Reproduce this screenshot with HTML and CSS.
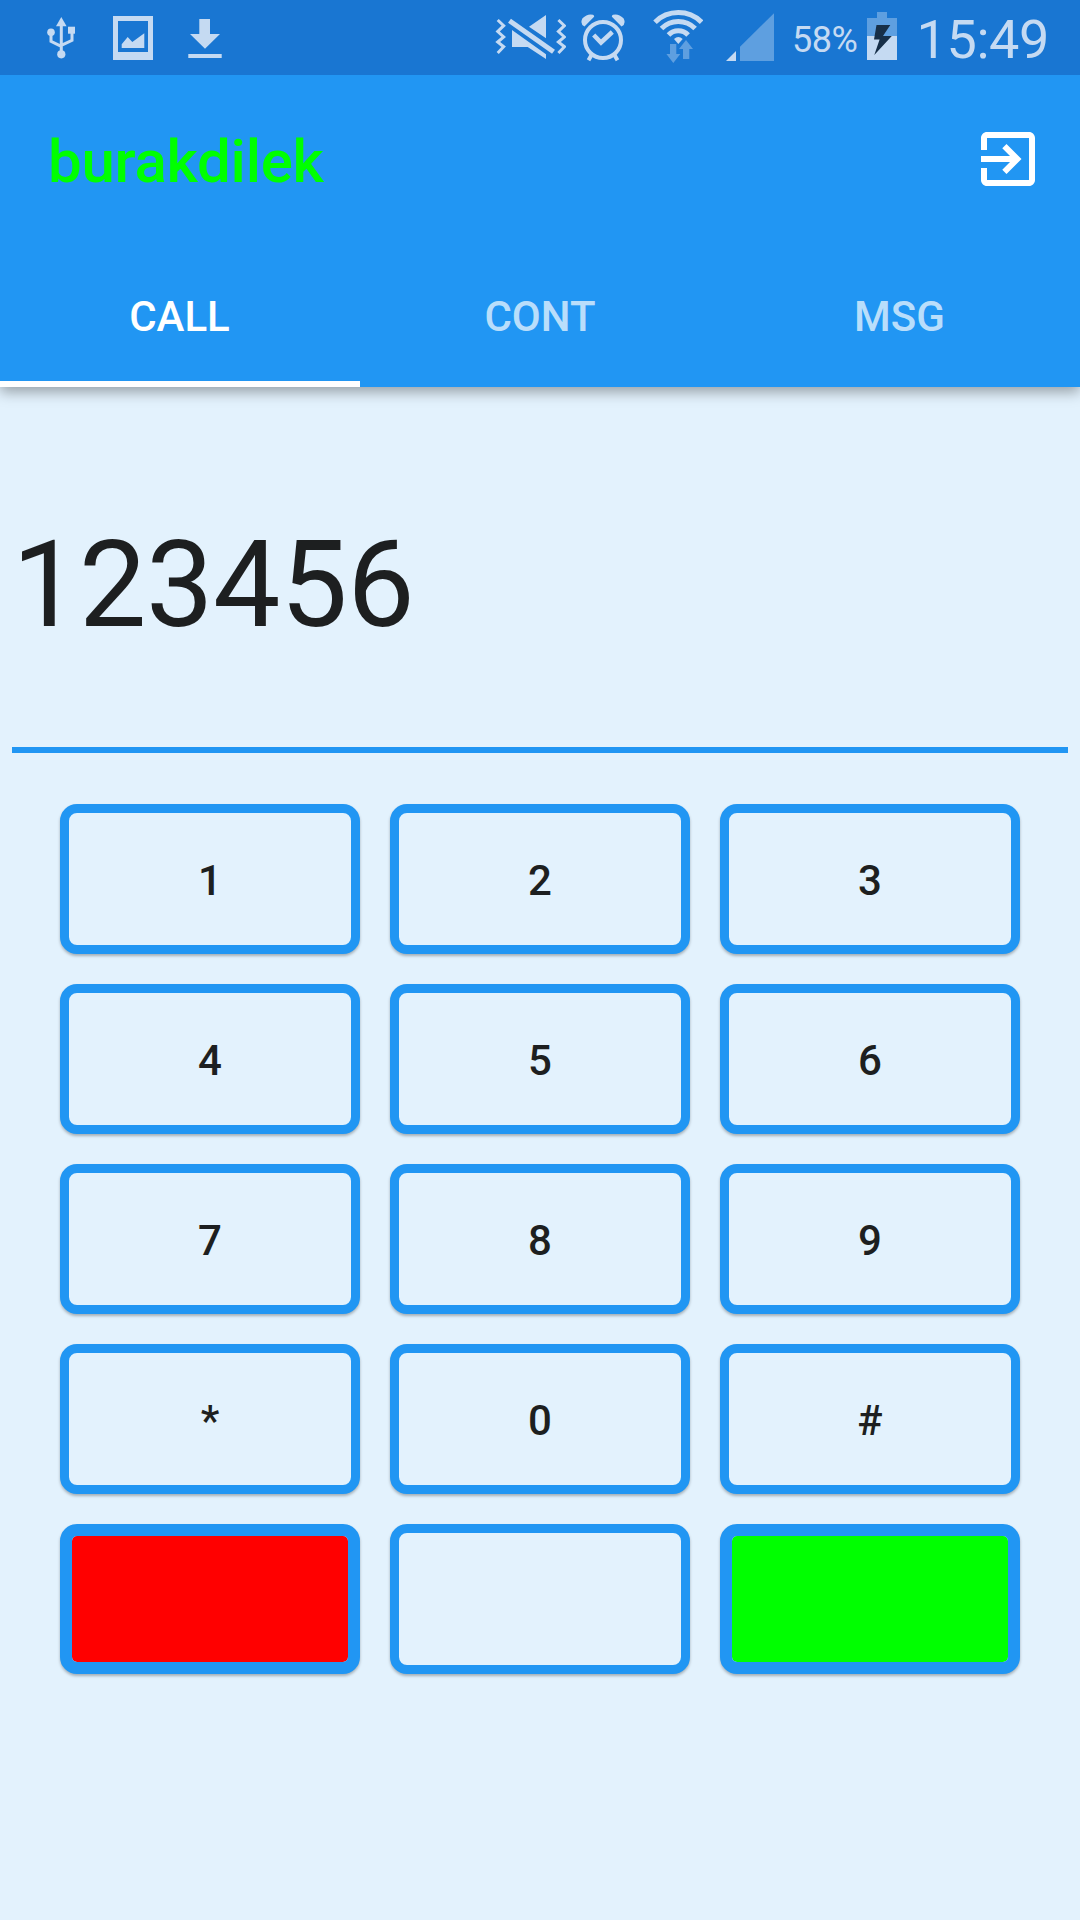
FILE: index.html
```html
<!DOCTYPE html>
<html lang="en">
<head>
<meta charset="utf-8">
<title>Dialer</title>
<link rel="stylesheet" href="styles.css">
</head>
<body>
<div class="screen">
  <div class="status">
    <div class="status-left">
      <svg width="30" height="75" viewBox="46 0 30 75">
        <g class="line" stroke-width="3"><path d="M61.3 24V54M51 34v7.3l10.3 5M72 33v7.3l-10.7 5"/></g>
        <g class="solid"><path d="M61.3 17l5.3 9.2H56z"/><circle cx="61.3" cy="54.3" r="4.1"/><circle cx="51" cy="32.3" r="3.8"/><path d="M68 26.7h7v7h-7z"/></g>
      </svg>
      <svg width="40" height="75" viewBox="113 0 40 75">
        <path class="solid" fill-rule="evenodd" d="M113 16h40v44h-40zM118 21v31h30V21z"/>
        <path class="solid" d="M121.7 44.3l6-7.3 4.6 5 12-8.7V48h-22.6z"/>
      </svg>
      <svg width="34" height="75" viewBox="188 0 34 75">
        <path class="solid" d="M199.3 19H210v15h10l-15 14.7L190 34h9.3zM188.3 54h33.4v4h-33.4z"/>
      </svg>
    </div>
    <div class="status-right">
      <svg width="71" height="75" viewBox="495 0 71 75">
        <g class="line" stroke-width="3"><path d="M497.7 20l6 5.7-6 5.8 6 5.5-6 5 6 4.7-6 6.3M558.4 20l6 5.7-6 5.8 6 5.5-6 5 6 4.7-6 6.3"/></g>
        <path class="line" stroke-width="5" d="M509.5 20.7l44 31"/>
        <path class="solid" d="M529 26.7L546 15v23.3zM512 30l34 24.3V59l-18.3-12H512z"/>
      </svg>
      <svg width="44" height="75" viewBox="581 0 44 75">
        <g class="line" stroke-width="4"><circle cx="603" cy="40" r="18"/><path d="M593.7 35l7.3 7.5 11.3-10.5" stroke-width="4.5"/><path d="M591.5 55l-3 5.3M614.5 55l3 5.3"/></g>
        <path class="solid" d="M584.5 26.5q-5-3-2-8.200q5-5 10.500-3.500q2 1 .6 2.500zM621.500 26.500q5-3 2-8.200q-5-5-10.500-3.500q-2 1-.6 2.500z"/>
      </svg>
      <svg width="50" height="75" viewBox="653 0 50 75">
        <g class="line" stroke-width="5"><path d="M655 22.200A33.100 33.100 0 0 1 701.600 22.200M661.500 28.500A23.400 23.400 0 0 1 695.100 28.500M668.500 35A13.500 13.500 0 0 1 688.100 35"/></g>
        <path class="solid" d="M674 39q4.300-4 8.700 0l-4.400 5z"/>
        <path class="dim" d="M670 44h6.300v10h4l-7 9-6.900-9h3.600zM683 59V49h-4l7-9 7 9h-3.700v10z"/>
      </svg>
      <svg width="48" height="75" viewBox="726 0 48 75">
        <path class="solid" d="M726 61l10-10v10z"/><path class="dim" d="M740 61V46.700L774 13.300V61z"/>
      </svg>
      <span class="percent">58%</span>
      <svg width="30" height="75" viewBox="867 0 30 75">
        <path class="dim" d="M877 12h10v6h10v18h-30V18h10z"/><path class="solid" d="M867 36h30v24h-30z"/>
        <path class="bolt" d="M876.500 25h13.800L883 36h8.800L874.300 55l5.300-15.500H874z"/>
      </svg>
      <span class="clock">15:49</span>
    </div>
  </div>
  <header class="appbar">
    <div class="toolbar">
      <h1 class="title">burakdilek</h1>
      <svg class="exit" width="72" height="72" viewBox="0 0 24 24"><path d="M10.090 15.590L11.500 17l5-5-5-5-1.410 1.410L12.670 11H3v2h9.670l-2.580 2.590zM19 3H5c-1.110 0-2 .9-2 2v4h2V5h14v14H5v-4H3v4c0 1.100.89 2 2 2h14c1.100 0 2-.9 2-2V5c0-1.100-.9-2-2-2z"/></svg>
    </div>
    <nav class="tabs">
      <div class="tab active">CALL</div>
      <div class="tab">CONT</div>
      <div class="tab">MSG</div>
    </nav>
  </header>
  <main class="content">
    <div class="number">123456</div>
    <div class="keypad">
      <button class="key">1</button><button class="key">2</button><button class="key">3</button>
      <button class="key">4</button><button class="key">5</button><button class="key">6</button>
      <button class="key">7</button><button class="key">8</button><button class="key">9</button>
      <button class="key">*</button><button class="key">0</button><button class="key">#</button>
      <button class="key hangup"></button><button class="key"></button><button class="key dial"></button>
    </div>
  </main>
</div>
</body>
</html>
```
FILE: styles.css
```css
* { box-sizing: border-box; }
body { margin: 0; font-family: Roboto, "Liberation Sans", sans-serif; color: #1d1f20; background: #e3f2fd; }
svg { display: block; flex: none; }
.screen { width: 1080px; height: 1920px; overflow: hidden; background: #e3f2fd; }

.status { position: relative; z-index: 1; display: flex; justify-content: space-between; height: 75px; padding: 0 33px 0 46px; background: #1976d2; color: #c5daf2; }
.status-left { display: flex; gap: 35px; }
.status-left svg:first-child { margin-right: 2px; }
.status-right { display: flex; }
.status-right svg + svg { margin-left: 15px; }
.status-right svg:nth-of-type(3) { margin-left: 28px; }
.status-right svg:nth-of-type(4) { margin-left: 23px; }
.solid { fill: #c5daf2; }
.line { fill: none; stroke: #c5daf2; }
.dim { fill: #5e9fe0; }
.bolt { fill: #172f48; }
.percent { width: 75px; margin-left: 18px; font-size: 36px; line-height: 80px; letter-spacing: -.5px; }
.clock { width: 134px; margin: 0 -2px 0 18px; font-size: 54px; line-height: 80px; text-align: right; letter-spacing: -.4px; }

.appbar { position: relative; height: 312px; background: #2196f3; box-shadow: 0 5px 13px rgba(0, 0, 0, .34); }
.toolbar { display: flex; align-items: center; justify-content: space-between; height: 168px; padding: 0 36px 0 48px; }
.title { margin: 0; padding-top: 5px; font-size: 60px; font-weight: 500; line-height: 72px; letter-spacing: -.25px; color: #0f0; }
.exit { fill: #fff; }
.tabs { display: grid; grid-template-columns: repeat(3, 1fr); height: 144px; }
.tab { height: 144px; padding: 3px 1px 0 0; border-bottom: 6px solid transparent; font-size: 42px; font-weight: 500; line-height: 141px; text-align: center; color: rgba(255, 255, 255, .7); }
.tab:nth-child(2) { padding-right: 0; }
.active { border-color: #fff; color: #fff; }

.content { padding: 0 12px; }
.number { height: 366px; padding-top: 128px; border-bottom: 6px solid #2196f3; font-size: 120px; line-height: 140px; letter-spacing: -.4px; }
.keypad { display: grid; grid-template-columns: repeat(3, 300px); grid-auto-rows: 150px; gap: 30px; justify-content: center; padding-top: 51px; }
.key { padding: 4px 0 0; border: 9px solid #2196f3; border-radius: 17px; background: #e3f2fd; box-shadow: 0 2px 3px rgba(0, 0, 0, .28); color: #1d1f20; font: 500 42px/1 Roboto, "Liberation Sans", sans-serif; }
.hangup { border-width: 12px; background: #f00; }
.dial { border-width: 12px; background: #0f0; }
.hangup, .dial { background-clip: padding-box; }
```
